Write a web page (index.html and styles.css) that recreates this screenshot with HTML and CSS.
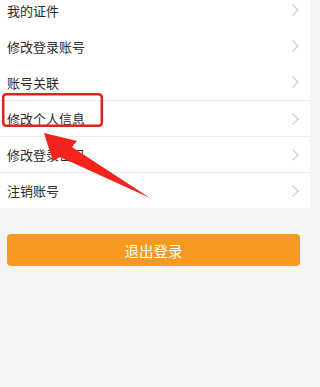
FILE: index.html
```html
<!DOCTYPE html>
<html lang="zh-CN">
<head>
<meta charset="utf-8">
<link rel="stylesheet" href="styles.css">
</head>
<body>
<div class="page">
  <ul class="menu">
    <li class="row"><span class="label">我的证件</span><span class="chev"></span></li>
    <li class="row"><span class="label">修改登录账号</span><span class="chev"></span></li>
    <li class="row"><span class="label">账号关联</span><span class="chev"></span></li>
    <li class="row sep"><span class="label">修改个人信息</span><span class="chev"></span></li>
    <li class="row sep"><span class="label">修改登录密码</span><span class="chev"></span></li>
    <li class="row sep"><span class="label">注销账号</span><span class="chev"></span></li>
  </ul>
  <button class="logout">退出登录</button>
  <svg class="annot" width="310" height="387" viewBox="0 0 310 387">
    <rect x="3.2" y="102.2" width="98.6" height="31.6" rx="3" ry="3" fill="none" stroke="#e3211f" stroke-width="2.6"/>
    <polygon points="44,141 77,149 72,155 150,206 60,165 53,169" fill="#f2241d"/>
  </svg>
</div>
</body>
</html>
```
FILE: styles.css
```css
html, body {
  margin: 0;
  padding: 0;
}
body {
  background: #f5f5f5;
  font-family: "Noto Sans CJK SC", "Noto Sans", sans-serif;
  width: 310px;
  height: 387px;
  overflow: hidden;
}
.page {
  position: relative;
  width: 310px;
  height: 387px;
}
.menu {
  list-style: none;
  margin: -8px 0 0 0;
  padding: 0;
  background: #ffffff;
}
.row {
  height: 36px;
  display: flex;
  align-items: center;
  justify-content: space-between;
  padding: 0 11px 0 7px;
  box-sizing: border-box;
}
.row.sep {
  border-top: 1px solid #ededed;
}
.label {
  font-size: 13px;
  color: #2b2b2b;
  line-height: 1;
}
.chev {
  width: 7px;
  height: 7px;
  border-top: 1px solid #c6c6c6;
  border-right: 1px solid #c6c6c6;
  transform: rotate(45deg);
  margin-right: 2px;
}
.logout {
  display: block;
  width: 293px;
  height: 32px;
  margin: 26px 10px 0 7px;
  border: none;
  border-radius: 4px;
  background: #f89a1f;
  color: #ffffff;
  font-family: "Noto Sans CJK SC", "Noto Sans", sans-serif;
  font-size: 14.5px;
  padding: 0;
}
.annot {
  position: absolute;
  left: 0;
  top: 0;
}
```
